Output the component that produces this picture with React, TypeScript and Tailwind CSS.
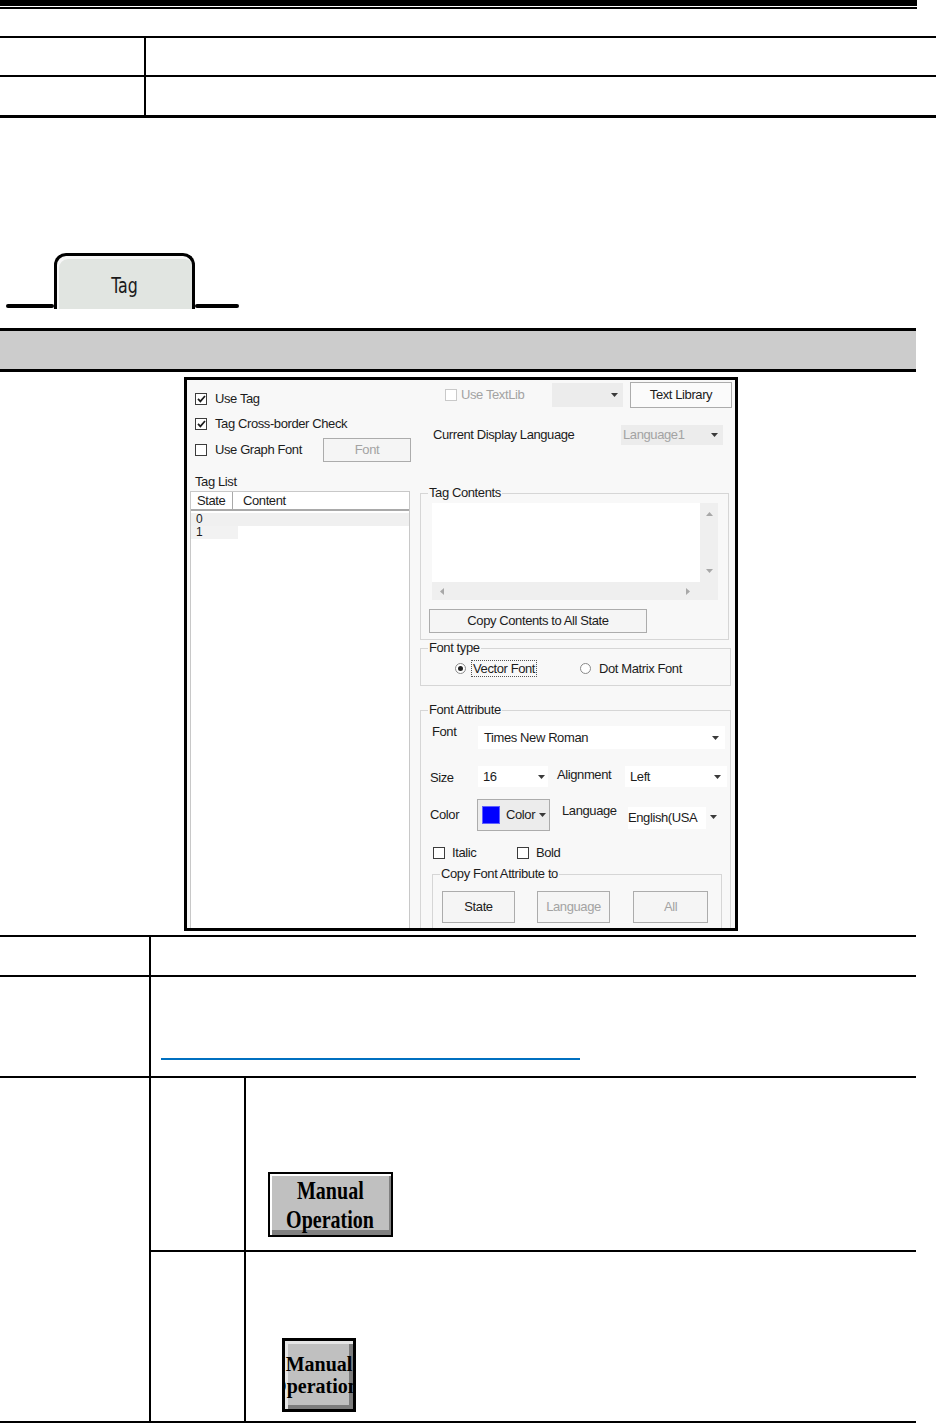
import React from "react";

const ui = "font-['Liberation_Sans',Arial,sans-serif] text-[13px] tracking-[-0.4px] text-[#1c1c1c]";

function Caret({ className = "" }: { className?: string }) {
  return (
    <svg width="7" height="4" viewBox="0 0 7 4" className={className}>
      <path d="M0 0h7L3.5 4z" fill="#3a3a3a" />
    </svg>
  );
}

function Tri({ dir }: { dir: "up" | "down" | "left" | "right" }) {
  const d = {
    up: "M0 4h7L3.5 0z",
    down: "M0 0h7L3.5 4z",
    left: "M4 0v7L0 3.5z",
    right: "M0 0v7L4 3.5z",
  }[dir];
  const v = dir === "up" || dir === "down";
  return (
    <svg width={v ? 7 : 4} height={v ? 4 : 7} viewBox={v ? "0 0 7 4" : "0 0 4 7"}>
      <path d={d} fill="#a8a8a8" />
    </svg>
  );
}

function Check({ checked = false, disabled = false }: { checked?: boolean; disabled?: boolean }) {
  return (
    <span
      className={`inline-flex h-[12px] w-[12px] shrink-0 items-center justify-center border bg-white ${
        disabled ? "border-[#c9c9c9]" : "border-[#3c3c3c]"
      }`}
    >
      {checked && (
        <svg width="9" height="8" viewBox="0 0 9 8">
          <path d="M1 3.8l2.4 2.6L8 1" stroke="#1c1c1c" strokeWidth="1.7" fill="none" />
        </svg>
      )}
    </span>
  );
}

function Radio({ on = false }: { on?: boolean }) {
  return (
    <span className="inline-flex h-[11px] w-[11px] shrink-0 items-center justify-center rounded-full border border-[#8a8a8a] bg-white">
      {on && <span className="h-[5px] w-[5px] rounded-full bg-[#222]" />}
    </span>
  );
}

function Group({ title, className = "", children }: { title: string; className?: string; children?: React.ReactNode }) {
  return (
    <div className={`relative border border-[#d6d6d6] ${className}`}>
      <span className="absolute -top-[9px] left-[7px] bg-[#f8f8f8] px-[1px] leading-[16px]">{title}</span>
      {children}
    </div>
  );
}

function Btn({ label, disabled = false, className = "" }: { label: string; disabled?: boolean; className?: string }) {
  return (
    <div
      className={`flex items-center justify-center border border-[#acacac] bg-[#f5f5f5] ${
        disabled ? "text-[#a3a3a3]" : ""
      } ${className}`}
    >
      {label}
    </div>
  );
}

function Dialog() {
  return (
    <div className={`ml-[184px] mt-[5px] flex h-[554px] w-[554px] border-[3px] border-black bg-[#f8f8f8] ${ui}`}>
      {/* left column */}
      <div className="flex w-[224px] flex-col">
        <div className="ml-[8px] mt-[12px] flex h-[14px] items-center gap-[8px]">
          <Check checked />
          <span>Use Tag</span>
        </div>
        <div className="ml-[8px] mt-[11px] flex h-[14px] items-center gap-[8px]">
          <Check checked />
          <span>Tag Cross-border Check</span>
        </div>
        <div className="ml-[8px] mt-[7px] flex h-[24px] items-center">
          <div className="flex w-[128px] items-center gap-[8px]">
            <Check />
            <span>Use Graph Font</span>
          </div>
          <Btn label="Font" disabled className="h-[24px] w-[88px]" />
        </div>
        <div className="ml-[8px] mt-[13px] leading-[14px]">Tag List</div>
        <div className="ml-[3px] mt-[2px] flex w-[220px] flex-1 flex-col border-x border-t border-[#c8c8c8] bg-white">
          <div className="flex h-[19px] items-center border-b-2 border-[#a9a9a9]">
            <span className="flex h-full w-[42px] items-center border-r border-[#a9a9a9] pl-[6px]">State</span>
            <span className="pl-[10px]">Content</span>
          </div>
          <div className="mt-[2px] h-[13px] bg-[#f0f0f0] pl-[5px] text-[12px] leading-[13px]">0</div>
          <div className="h-[13px] w-[47px] bg-[#f2f2f2] pl-[5px] text-[12px] leading-[13px]">1</div>
        </div>
      </div>

      {/* right column */}
      <div className="flex flex-1 flex-col">
        <div className="mt-[2px] flex h-[26px] items-center">
          <div className="ml-[34px] flex w-[107px] items-center gap-[4px] text-[#a3a3a3]">
            <Check disabled />
            <span>Use TextLib</span>
          </div>
          <div className="flex h-[24px] w-[71px] items-center justify-end bg-[#ececec] pr-[5px]">
            <Caret />
          </div>
          <Btn label="Text Library" className="ml-[7px] h-[26px] w-[102px] bg-[#fbfbfb]" />
        </div>
        <div className="mt-[17px] flex h-[20px] items-center">
          <span className="ml-[22px] w-[188px]">Current Display Language</span>
          <div className="flex h-[20px] w-[102px] items-center justify-between bg-[#ececec] pl-[2px] pr-[5px] text-[#a3a3a3]">
            <span>Language1</span>
            <Caret />
          </div>
        </div>

        <Group title="Tag Contents" className="ml-[9px] mt-[48px] h-[147px] w-[309px]">
          <div className="ml-[11px] mt-[9px] flex h-[97px] w-[286px] flex-col bg-[#efefef]">
            <div className="flex h-[79px]">
              <div className="flex-1 bg-white" />
              <div className="flex w-[18px] flex-col items-center justify-between py-[9px]">
                <Tri dir="up" />
                <Tri dir="down" />
              </div>
            </div>
            <div className="flex h-[18px] items-center justify-between pl-[8px] pr-[28px]">
              <Tri dir="left" />
              <Tri dir="right" />
            </div>
          </div>
          <Btn label="Copy Contents to All State" className="ml-[8px] mt-[9px] h-[24px] w-[218px]" />
        </Group>

        <Group title="Font type" className="ml-[9px] mt-[8px] h-[38px] w-[311px]">
          <div className="flex h-full items-center pt-[3px]">
            <div className="ml-[34px] flex w-[125px] items-center">
              <Radio on />
              <span className="ml-[5px] border border-dotted border-[#555] px-[1px] leading-[15px]">Vector Font</span>
            </div>
            <Radio />
            <span className="ml-[8px]">Dot Matrix Font</span>
          </div>
        </Group>

        <Group title="Font Attribute" className="ml-[9px] mt-[24px] flex w-[311px] flex-1 flex-col border-b-0">
          <div className="mt-[13px] flex">
            <span className="ml-[11px] w-[46px] leading-[15px]">Font</span>
            <div className="mt-[2px] flex h-[23px] w-[247px] items-center justify-between bg-white pl-[6px] pr-[6px]">
              <span>Times New Roman</span>
              <Caret />
            </div>
          </div>
          <div className="mt-[17px] flex h-[21px] items-center">
            <span className="ml-[9px] w-[48px] translate-y-[1px]">Size</span>
            <div className="flex h-[21px] w-[70px] items-center justify-between bg-white pl-[5px] pr-[3px]">
              <span>16</span>
              <Caret />
            </div>
            <span className="ml-[9px] w-[68px] -translate-y-[2px]">Alignment</span>
            <div className="flex h-[21px] w-[102px] items-center justify-between bg-white pl-[5px] pr-[6px]">
              <span>Left</span>
              <Caret />
            </div>
          </div>
          <div className="mt-[12px] flex h-[32px] items-center">
            <span className="ml-[9px] w-[47px]">Color</span>
            <div className="flex h-[32px] w-[73px] items-center border border-[#acacac] bg-[#ececec] pl-[4px]">
              <span className="h-[18px] w-[18px] border border-[#6060ff] bg-[#0000ff]" />
              <span className="ml-[6px]">Color</span>
              <Caret className="ml-[4px]" />
            </div>
            <span className="ml-[12px] w-[66px] -translate-y-[4px]">Language</span>
            <div className="flex h-[22px] w-[78px] translate-y-[3px] items-center bg-white">
              <span className="whitespace-nowrap">English(USA</span>
            </div>
            <Caret className="ml-[4px] translate-y-[2px]" />
          </div>
          <div className="mt-[16px] flex h-[12px] items-center">
            <div className="ml-[12px] flex w-[84px] items-center gap-[7px]">
              <Check />
              <span>Italic</span>
            </div>
            <Check />
            <span className="ml-[7px]">Bold</span>
          </div>
          <Group title="Copy Font Attribute to" className="ml-[11px] mt-[15px] flex w-[290px] flex-1 border-b-0">
            <div className="mt-[16px] flex h-[32px]">
              <Btn label="State" className="ml-[9px] w-[73px]" />
              <Btn label="Language" disabled className="ml-[22px] w-[73px]" />
              <Btn label="All" disabled className="ml-[23px] w-[75px]" />
            </div>
          </Group>
        </Group>
      </div>
    </div>
  );
}

export default function App() {
  return (
    <div className="h-[1423px] w-[936px] overflow-hidden bg-white">
      {/* page header rule */}
      <div className="w-[917px]">
        <div className="h-[6px] bg-black" />
        <div className="mt-[1px] h-[2px] bg-black" />
      </div>

      {/* first table */}
      <div className="mt-[27px] border-b-[3px] border-t-2 border-black">
        <div className="flex h-[39px] border-b-2 border-black">
          <div className="w-[146px] border-r-2 border-black" />
        </div>
        <div className="flex h-[38px]">
          <div className="w-[146px] border-r-2 border-black" />
        </div>
      </div>

      {/* tab */}
      <div className="mt-[135px] flex h-[56px] items-end">
        <div className="mb-[1px] ml-[6px] h-[4px] w-[48px] rounded-full bg-black" />
        <div className="flex h-[56px] w-[141px] items-center justify-center rounded-t-[12px] border-[3px] border-b-0 border-black bg-[#e1e5e1] pt-[5px] font-['Liberation_Sans_Narrow','DejaVu_Sans_Condensed',sans-serif] text-[22px] text-[#1a1a1a] shadow-[inset_2px_3px_0_#f7f7f7]">
          <span className="scale-x-[0.8]">Tag</span>
        </div>
        <div className="mb-[1px] h-[4px] w-[44px] rounded-full bg-black" />
      </div>

      {/* grey section bar */}
      <div className="mt-[19px] h-[44px] w-[916px] border-y-[3px] border-black bg-[#cccccc]" />

      <Dialog />

      {/* property table */}
      <div className="mt-[4px] w-[916px] border-b-2 border-t-2 border-black">
        <div className="flex h-[40px] border-b-2 border-black">
          <div className="w-[151px] border-r-2 border-black" />
        </div>
        <div className="flex h-[101px] border-b-2 border-black">
          <div className="w-[151px] border-r-2 border-black" />
          <div className="pl-[10px] pt-[81px]">
            <div className="h-[2px] w-[419px] bg-[#0070c0]" />
          </div>
        </div>
        <div className="flex">
          <div className="w-[151px] border-r-2 border-black" />
          <div className="flex flex-1 flex-col">
            <div className="flex h-[174px] border-b-2 border-black">
              <div className="w-[95px] border-r-2 border-black" />
              <div className="pl-[22px] pt-[94px]">
                <div className="flex h-[65px] w-[125px] flex-col items-center justify-center border-2 border-black bg-[#c0c0c0] font-['Liberation_Serif',serif] text-[26px] font-bold leading-[29px] text-black shadow-[inset_2px_2px_0_#ffffff,inset_-2px_-5px_0_#808080]">
                  <span className="scale-x-[0.77]">Manual</span>
                  <span className="scale-x-[0.77]">Operation</span>
                </div>
              </div>
            </div>
            <div className="flex h-[169px]">
              <div className="w-[95px] border-r-2 border-black" />
              <div className="pl-[36px] pt-[86px]">
                <div className="flex h-[74px] w-[74px] flex-col items-center justify-center overflow-hidden border-[3px] border-black bg-[#c0c0c0] font-['Liberation_Serif',serif] text-[20px] font-bold leading-[22px] text-black shadow-[inset_3px_3px_0_#e6e6e6,inset_-4px_-4px_0_#7c7c7c]">
                  <span className="whitespace-nowrap">Manual</span>
                  <span className="-translate-x-[4px] whitespace-nowrap">Operation</span>
                </div>
              </div>
            </div>
          </div>
        </div>
      </div>
    </div>
  );
}
